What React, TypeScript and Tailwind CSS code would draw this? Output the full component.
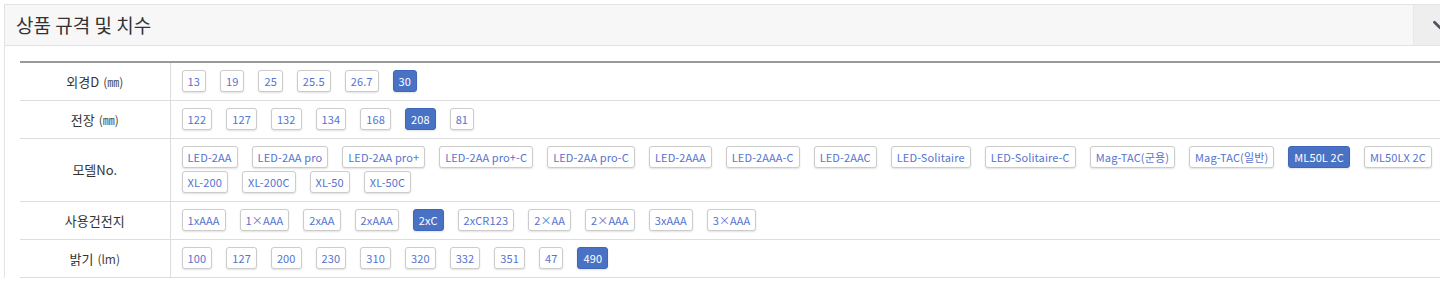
import { ChevronDown } from 'lucide-react';

type Row = {
  label: string;
  unit?: string;
  items: string[];
  active: string;
};

const rows: Row[] = [
  { label: '외경D', unit: '(㎜)', items: ['13', '19', '25', '25.5', '26.7', '30'], active: '30' },
  { label: '전장', unit: '(㎜)', items: ['122', '127', '132', '134', '168', '208', '81'], active: '208' },
  {
    label: '모델No.',
    items: [
      'LED-2AA',
      'LED-2AA pro',
      'LED-2AA pro+',
      'LED-2AA pro+-C',
      'LED-2AA pro-C',
      'LED-2AAA',
      'LED-2AAA-C',
      'LED-2AAC',
      'LED-Solitaire',
      'LED-Solitaire-C',
      'Mag-TAC(군용)',
      'Mag-TAC(일반)',
      'ML50L 2C',
      'ML50LX 2C',
      'XL-200',
      'XL-200C',
      'XL-50',
      'XL-50C',
    ],
    active: 'ML50L 2C',
  },
  {
    label: '사용건전지',
    items: ['1xAAA', '1×AAA', '2xAA', '2xAAA', '2xC', '2xCR123', '2×AA', '2×AAA', '3xAAA', '3×AAA'],
    active: '2xC',
  },
  { label: '밝기', unit: '(lm)', items: ['100', '127', '200', '230', '310', '320', '332', '351', '47', '490'], active: '490' },
];

function OptionButton({ text, active }: { text: string; active: boolean }) {
  return (
    <button
      className={`h-[22px] px-[5px] rounded-[3px] border text-[11px] leading-[20px] tracking-[0.12px] shadow-[0_1px_2px_rgba(0,0,0,0.12)] ${
        active ? 'bg-[#4a72c4] border-[#3f66b8] text-white' : 'bg-white border-[#cccccc] text-[#5573cf]'
      }`}
    >
      {text}
    </button>
  );
}

export default function App() {
  return (
    <div
      className="h-[281px] w-[1440px] overflow-hidden bg-white pl-[4px] pt-[4px]"
      style={{ fontFamily: '"Noto Sans CJK KR", "Noto Sans", sans-serif' }}
    >
      <div className="w-[1456px] border-l border-t border-[#e3e3e3]">
        <div className="flex h-[41px] border-b border-[#e3e3e3] bg-[#f7f7f7]">
          <div className="flex-1 pl-[11px] flex items-center text-[19px] text-[#333]">
            상품 규격 및 치수
          </div>
          <div className="w-[47px] shrink-0 flex items-center justify-center pl-[6px] border-l border-[#e9e9e9] bg-[#eeeeee]">
            <ChevronDown size={22} strokeWidth={3} className="text-[#4d5560]" />
          </div>
        </div>

        <div className="pl-[15px] pt-[15px]">
          <table className="w-[1432px] border-collapse border-t-2 border-[#999999]">
            <tbody>
              {rows.map((row) => (
                <tr key={row.label} className="border-b border-[#dddddd]">
                  <th className="w-[150px] border-r border-[#dddddd] text-center align-middle font-normal text-[13px] text-[#333]">
                    {row.label}
                    {row.unit && <span className="ml-[4px] text-[12px] text-[#444]">{row.unit}</span>}
                  </th>
                  <td className="pl-[11px] pt-[7px] pb-[8px]">
                    <div className="flex flex-wrap gap-x-[14px] gap-y-[3px]">
                      {row.items.map((item) => (
                        <OptionButton key={item} text={item} active={item === row.active} />
                      ))}
                    </div>
                  </td>
                </tr>
              ))}
            </tbody>
          </table>
        </div>
      </div>
    </div>
  );
}
